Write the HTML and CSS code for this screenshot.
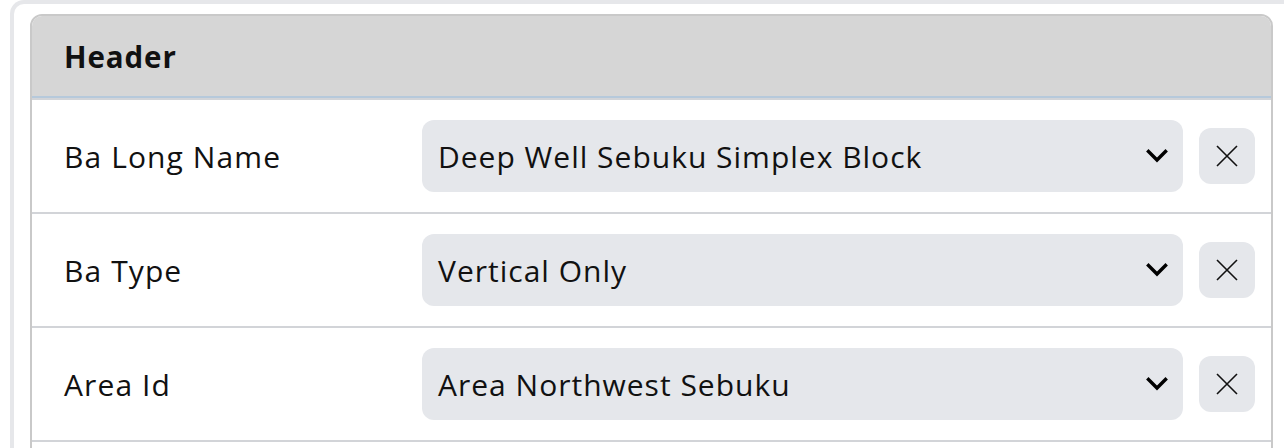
FILE: index.html
```html
<!DOCTYPE html>
<html>
<head>
<meta charset="utf-8">
<link rel="stylesheet" href="styles.css">
</head>
<body>
<div class="frame">
  <div class="card">
    <div class="card-header">Header</div>
    <div class="row">
      <div class="label">Ba Long Name</div>
      <div class="select"><span class="value">Deep Well Sebuku Simplex Block</span>
        <svg class="chev" width="22" height="14" viewBox="0 0 22 14"><path d="M2.5 2.5 L11 11 L19.5 2.5" fill="none" stroke="#000" stroke-width="3.4" stroke-linecap="square"/></svg>
      </div>
      <button class="clear"><svg width="24" height="24" viewBox="0 0 24 24"><path d="M2 2 L22 22 M22 2 L2 22" stroke="#111" stroke-width="1.6" fill="none"/></svg></button>
    </div>
    <div class="row">
      <div class="label">Ba Type</div>
      <div class="select"><span class="value">Vertical Only</span>
        <svg class="chev" width="22" height="14" viewBox="0 0 22 14"><path d="M2.5 2.5 L11 11 L19.5 2.5" fill="none" stroke="#000" stroke-width="3.4" stroke-linecap="square"/></svg>
      </div>
      <button class="clear"><svg width="24" height="24" viewBox="0 0 24 24"><path d="M2 2 L22 22 M22 2 L2 22" stroke="#111" stroke-width="1.6" fill="none"/></svg></button>
    </div>
    <div class="row">
      <div class="label">Area Id</div>
      <div class="select"><span class="value">Area Northwest Sebuku</span>
        <svg class="chev" width="22" height="14" viewBox="0 0 22 14"><path d="M2.5 2.5 L11 11 L19.5 2.5" fill="none" stroke="#000" stroke-width="3.4" stroke-linecap="square"/></svg>
      </div>
      <button class="clear"><svg width="24" height="24" viewBox="0 0 24 24"><path d="M2 2 L22 22 M22 2 L2 22" stroke="#111" stroke-width="1.6" fill="none"/></svg></button>
    </div>
    <div class="row row-partial"></div>
  </div>
</div>
</body>
</html>
```

FILE: styles.css
```css
html, body {
  margin: 0;
  padding: 0;
  background: #fff;
  overflow: hidden;
  width: 1284px;
  height: 448px;
}
body {
  font-family: "Open Sans", "Liberation Sans", sans-serif;
  color: #111;
}
.frame {
  margin-left: 10px;
  width: 1320px;
  height: 448px;
  border: 4px solid #e6e7ea;
  border-bottom: none;
  border-radius: 14px 14px 0 0;
  padding: 10px 0 0 16px;
  box-sizing: border-box;
  overflow: hidden;
}
.card {
  box-sizing: border-box;
  width: 1243px;
  border: 2px solid #c9c9c9;
  border-radius: 12px;
  overflow: hidden;
  background: #fff;
}
.card-header {
  background: #d6d6d6;
  height: 80px;
  display: flex;
  align-items: center;
  padding-left: 32px;
  font-size: 29.5px;
  letter-spacing: 0.9px;
  font-weight: 700;
  border-bottom: 2px solid #b6c9db;
  color: #111;
}
.row {
  display: grid;
  grid-template-columns: 358px 1fr auto;
  align-items: center;
  padding: 20px 16px 20px 32px;
  border-top: 2px solid #d2d4d8;
  height: 72px;
}
.label {
  font-size: 30px;
  letter-spacing: 1.1px;
}
.select {
  height: 72px;
  background: #e5e7eb;
  border-radius: 12px;
  display: flex;
  align-items: center;
  padding: 0 15px 0 16px;
  font-size: 30px;
  letter-spacing: 1px;
}
.value { flex: 1; }
.chev { display: block; }
.clear {
  margin-left: 16px;
  width: 56px;
  height: 56px;
  border: none;
  background: #e5e7eb;
  border-radius: 12px;
  display: flex;
  align-items: center;
  justify-content: center;
  padding: 0;
}
.clear svg { display: block; }
```
